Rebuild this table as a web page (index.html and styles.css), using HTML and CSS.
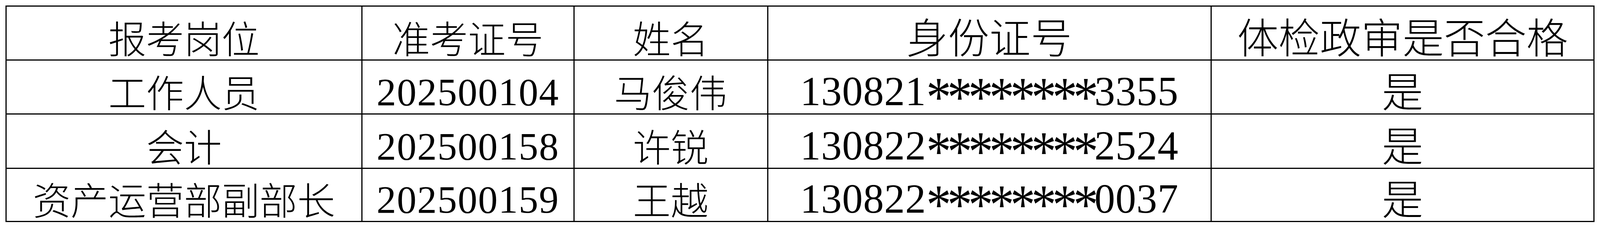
FILE: index.html
```html
<!DOCTYPE html>
<html lang="zh-CN">
<head>
<meta charset="utf-8">
<title>体检政审结果</title>
<link rel="stylesheet" href="styles.css">
</head>
<body>
<div class="page">
<table class="grid">
<colgroup>
<col class="c1"><col class="c2"><col class="c3"><col class="c4"><col class="c5">
</colgroup>
<tbody>
<tr>
<td>报考岗位</td>
<td>准考证号</td>
<td>姓名</td>
<td class="big">身份证号</td>
<td class="big">体检政审是否合格</td>
</tr>
<tr>
<td>工作人员</td>
<td class="num">202500104</td>
<td>马俊伟</td>
<td class="id">130821<span class="stars">********</span>3355</td>
<td class="big">是</td>
</tr>
<tr class="mid">
<td>会计</td>
<td class="num">202500158</td>
<td>许锐</td>
<td class="id">130822<span class="stars">********</span>2524</td>
<td class="big">是</td>
</tr>
<tr class="last">
<td>资产运营部副部长</td>
<td class="num">202500159</td>
<td>王越</td>
<td class="id">130822<span class="stars">********</span>0037</td>
<td class="big">是</td>
</tr>
</tbody>
</table>
</div>
</body>
</html>
```

FILE: styles.css
```css
:root {
  --u: calc(100vw / 4490);
}

html, body {
  margin: 0;
  padding: 0;
  background: #ffffff;
}

.page {
  padding: calc(15 * var(--u)) calc(15 * var(--u)) 0 calc(15 * var(--u));
}

.grid {
  border-collapse: collapse;
  table-layout: fixed;
  width: 100%;
  color: #000000;
}

.c1 { width: 22.42%; }
.c2 { width: 13.34%; }
.c3 { width: 12.2%; }
.c4 { width: 27.92%; }
.c5 { width: 24.12%; }

.grid td {
  --pad: 10;
  --row: 152;
  border: calc(4 * var(--u)) solid #000000;
  padding: 0 0 calc(var(--pad) * var(--u)) 0;
  height: calc((var(--row) - 4 - var(--pad)) * var(--u));
  text-align: center;
  vertical-align: bottom;
  font-family: "Noto Sans CJK SC", sans-serif;
  font-weight: 300;
  font-size: calc(106 * var(--u));
  line-height: 1;
  white-space: nowrap;
}

.grid tr.mid td {
  --row: 153;
}

.grid tr.last td {
  --row: 150;
}

.grid td.big {
  font-size: calc(116 * var(--u));
}

.grid td.num {
  --pad: 4;
  font-family: "Liberation Serif", serif;
  font-weight: 400;
  font-size: calc(110 * var(--u));
  letter-spacing: calc(2 * var(--u));
}

.grid td.id {
  --pad: 3;
  font-family: "Liberation Serif", serif;
  font-weight: 400;
  font-size: calc(116 * var(--u));
  letter-spacing: calc(1 * var(--u));
}

.stars {
  display: inline-block;
  font-size: calc(140 * var(--u));
  line-height: 0;
  letter-spacing: calc(-11 * var(--u));
  vertical-align: calc(-27 * var(--u));
  transform: scaleY(1.12);
  transform-origin: 50% calc(18 * var(--u));
}
```
